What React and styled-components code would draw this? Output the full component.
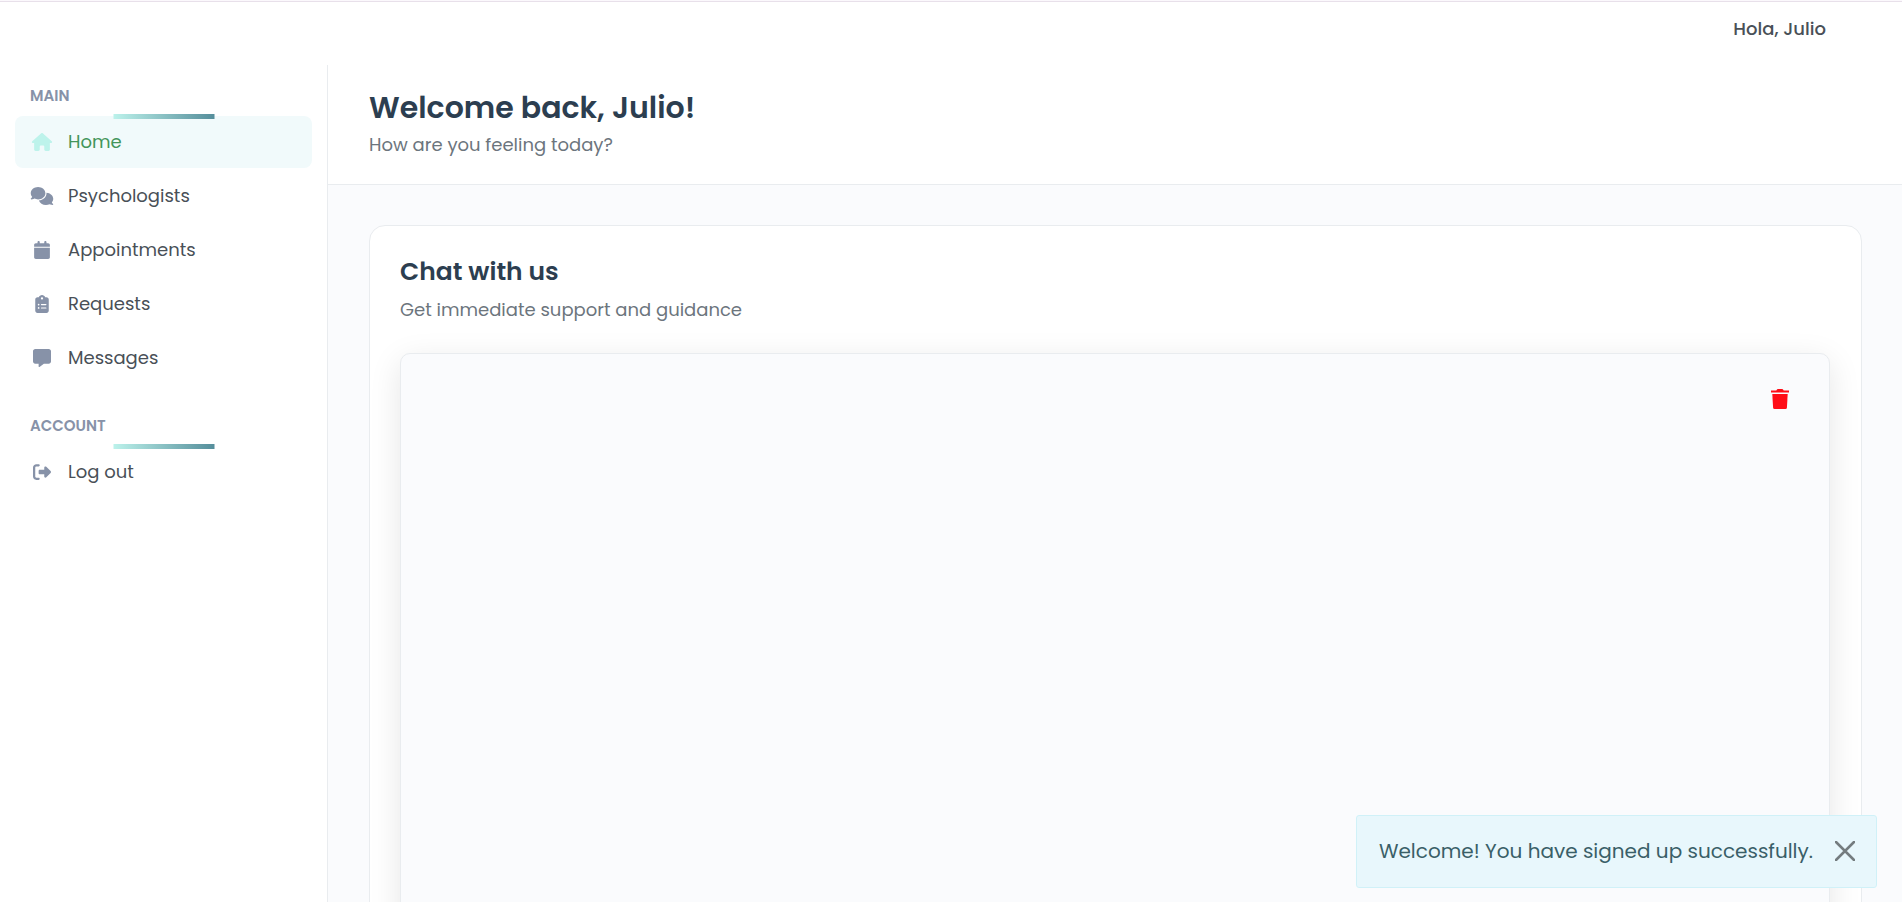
import React from "react";
import styled, { createGlobalStyle } from "styled-components";
import {
  FaHouse,
  FaComments,
  FaCalendar,
  FaClipboardList,
  FaMessage,
  FaRightFromBracket,
} from "react-icons/fa6";

const GlobalStyle = createGlobalStyle`
  * {
    box-sizing: border-box;
  }
  body {
    margin: 0;
    font-family: "Poppins", "Inter", sans-serif;
    font-size: 18px;
    color: #3d4852;
    background: #fff;
  }
  h1, h2, h3, p, ul {
    margin: 0;
    padding: 0;
  }
`;

const Page = styled.div`
  height: 100vh;
  display: flex;
  flex-direction: column;
  overflow: hidden;
  border-top: 1px solid #fbf8fc;
`;

const Navbar = styled.header`
  flex: none;
  height: 64px;
  padding: 13px 76px 0 24px;
  text-align: right;
  border-top: 1px solid #e8e0ea;
`;

const Greeting = styled.span`
  font-weight: 500;
  line-height: 27px;
  color: #495057;
`;

const Body = styled.div`
  flex: 1;
  min-height: 0;
  display: flex;
`;

const Sidebar = styled.nav`
  flex: none;
  width: 328px;
  padding: 18px 15px;
  border-right: 1px solid #e9ecef;
`;

const NavSection = styled.section`
  margin-bottom: 29px;
`;

const NavTitle = styled.h3`
  position: relative;
  height: 33px;
  padding-left: 15px;
  font-size: 15px;
  font-weight: 600;
  line-height: 25px;
  text-transform: uppercase;
  color: #8792a8;

  &::after {
    content: "";
    position: absolute;
    z-index: 1;
    left: 50%;
    bottom: -3px;
    width: 101px;
    height: 5px;
    transform: translateX(-50%);
    background: linear-gradient(90deg, #bcf2eb, #558e9b);
  }
`;

const NavList = styled.ul`
  display: flex;
  flex-direction: column;
  gap: 2px;
  list-style: none;
`;

const NavLink = styled.a`
  display: flex;
  align-items: center;
  gap: 14px;
  height: 52px;
  padding: 0 15px 1px;
  border-radius: 8px;
  text-decoration: none;
  color: ${({ $active }) => ($active ? "#43955a" : "#495057")};
  background: ${({ $active }) => ($active ? "#f1fafb" : "transparent")};

  svg {
    width: 24px;
    height: 18px;
    color: ${({ $active }) => ($active ? "#bdf3eb" : "#8792a8")};
  }
`;

const Main = styled.main`
  flex: 1;
  min-width: 0;
  background: #fafbfd;
`;

const Welcome = styled.div`
  height: 120px;
  padding: 20px 41px;
  background: #fff;
  border-bottom: 1px solid #e9ecef;
`;

const Title = styled.h1`
  font-size: 30px;
  font-weight: 600;
  line-height: 46px;
  color: #2c3e50;
`;

const Subtitle = styled.p`
  line-height: 28px;
  color: #6c757d;
`;

const Card = styled.section`
  margin: 40px 40px 40px 41px;
  padding: 30px 31px 30px 30px;
  background: #fff;
  border: 1px solid #e9ecef;
  border-radius: 16px;
`;

const CardTitle = styled.h2`
  margin-bottom: 8px;
  font-size: 25px;
  font-weight: 600;
  line-height: 32px;
  color: #2c3e50;
`;

const ChatBox = styled.div`
  display: flex;
  justify-content: flex-end;
  align-items: flex-start;
  height: 680px;
  margin-top: 29px;
  padding: 35px 40px;
  background: #fafbfd;
  border: 1px solid #e9ecef;
  border-radius: 10px;
  box-shadow: 0 8px 32px rgba(0, 0, 0, 0.1);
`;

const IconButton = styled.button`
  display: flex;
  padding: 0;
  border: 0;
  background: none;
  cursor: pointer;
  color: ${({ $color }) => $color};
`;

const Toast = styled.div`
  position: fixed;
  right: 25px;
  bottom: 14px;
  z-index: 10;
  display: flex;
  align-items: center;
  gap: 22px;
  height: 73px;
  padding: 0 21px 2px 22px;
  font-size: 20px;
  color: #3a5f68;
  background: #e8f7fc;
  border: 1px solid #d0f1f8;
  border-radius: 3px;
`;

const sections = [
  {
    title: "Main",
    links: [
      { label: "Home", icon: FaHouse, active: true },
      { label: "Psychologists", icon: FaComments },
      { label: "Appointments", icon: FaCalendar },
      { label: "Requests", icon: FaClipboardList },
      { label: "Messages", icon: FaMessage },
    ],
  },
  {
    title: "Account",
    links: [{ label: "Log out", icon: FaRightFromBracket }],
  },
];

function TrashIcon() {
  return (
    <svg width="18" height="20" viewBox="0 0 18 20" fill="currentColor">
      <path d="M0 1.5h5.3L6 .4Q6.200 0 6.700 0h4.600q.5 0 .7.400l.7 1.100H18v2H0z" />
      <path d="M1.300 5h15.400l-.8 13.700q-.1 1.300-1.400 1.300h-11q-1.300 0-1.400-1.300z" />
    </svg>
  );
}

function CloseIcon() {
  return (
    <svg width="20" height="20" viewBox="0 0 20 20" fill="none">
      <path
        d="M1 1l18 18M19 1L1 19"
        stroke="currentColor"
        strokeWidth="2.5"
        strokeLinecap="round"
      />
    </svg>
  );
}

function SideMenu() {
  return (
    <Sidebar>
      {sections.map((section) => (
        <NavSection key={section.title}>
          <NavTitle>{section.title}</NavTitle>
          <NavList>
            {section.links.map(({ label, icon: Icon, active }) => (
              <li key={label}>
                <NavLink href="#" $active={active}>
                  <Icon />
                  {label}
                </NavLink>
              </li>
            ))}
          </NavList>
        </NavSection>
      ))}
    </Sidebar>
  );
}

function App() {
  return (
    <Page>
      <GlobalStyle />
      <Navbar>
        <Greeting>Hola, Julio</Greeting>
      </Navbar>
      <Body>
        <SideMenu />
        <Main>
          <Welcome>
            <Title>Welcome back, Julio!</Title>
            <Subtitle>How are you feeling today?</Subtitle>
          </Welcome>
          <Card>
            <CardTitle>Chat with us</CardTitle>
            <Subtitle>Get immediate support and guidance</Subtitle>
            <ChatBox>
              <IconButton $color="#ff0d17" aria-label="Delete chat">
                <TrashIcon />
              </IconButton>
            </ChatBox>
          </Card>
        </Main>
      </Body>
      <Toast role="alert">
        Welcome! You have signed up successfully.
        <IconButton $color="#747c7f" aria-label="Close">
          <CloseIcon />
        </IconButton>
      </Toast>
    </Page>
  );
}

export default App;
